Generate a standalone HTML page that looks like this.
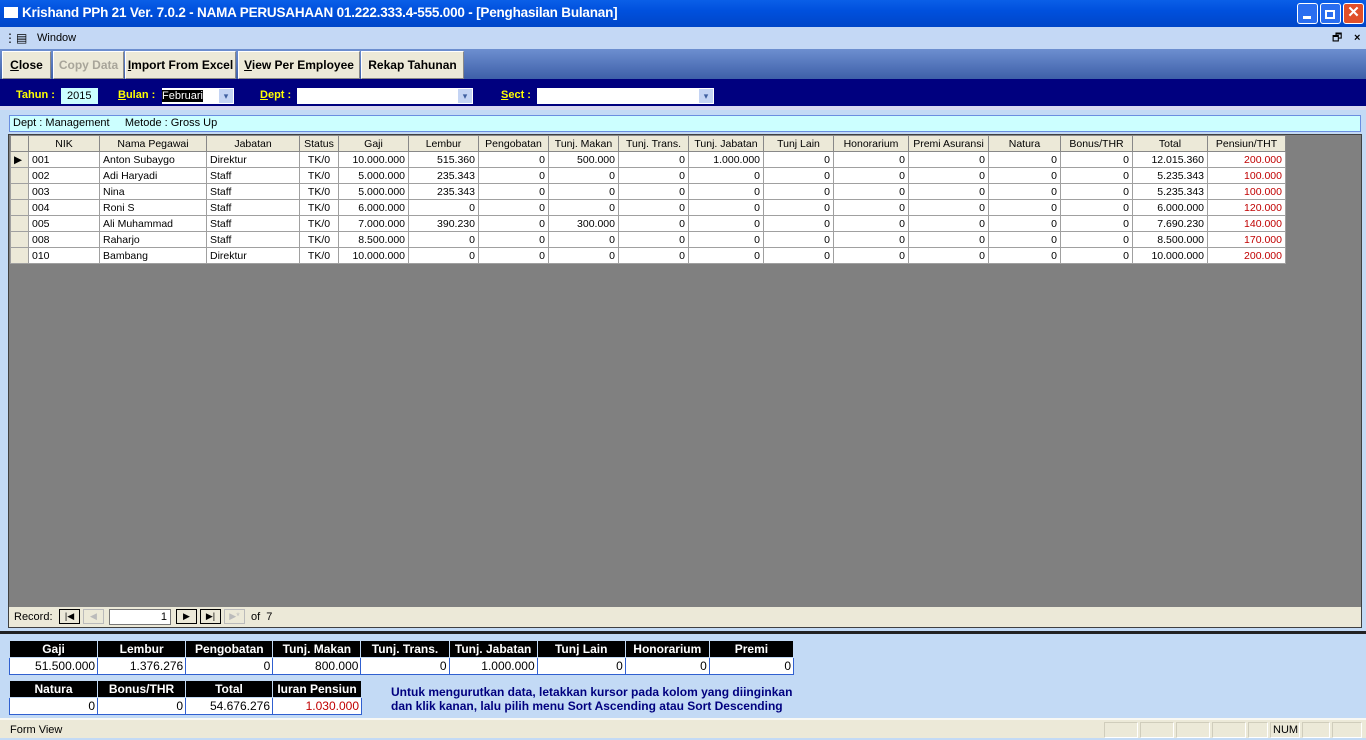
<!DOCTYPE html>
<html><head><meta charset="utf-8"><style>
*{margin:0;padding:0;box-sizing:border-box}
body{width:1366px;height:738px;overflow:hidden;background:#c3daf5;font-family:"Liberation Sans",sans-serif;position:relative}
.a{position:absolute}
#title{left:0;top:0;width:1366px;height:27px;background:linear-gradient(#0a5fe8,#0050dd 40%,#0046c8);color:#fff;font-weight:bold;font-size:13.5px;line-height:26px;padding-left:22px;letter-spacing:-0.2px}
.wb{top:3px;width:21px;height:21px;border:1px solid #fff;border-radius:3px;background:#2a6ef0}
#menu{left:0;top:27px;width:1366px;height:22px;background:#c4d8f5;font-size:11px;line-height:22px}
#tool{left:0;top:49px;width:1366px;height:30px;background:linear-gradient(#6d8fd0,#3e5fa8)}
.btn{position:absolute;top:51px;height:28px;background:#ece9d8;border:1px solid #888;border-top-color:#fff;border-left-color:#fff;font-weight:bold;font-size:12px;line-height:26px;text-align:center;color:#000}
#filt{left:0;top:79px;width:1366px;height:31px;background:#00007f;border-bottom:4px solid #d8d8f0}
.lab{color:#ffff00;font-weight:bold;font-size:11px;top:89px}
.inp{background:#fff;height:16px;top:88px}
#info{left:9px;top:115px;width:1352px;height:17px;background:#ccffff;border:1px solid #6a8ee0;font-size:11px;line-height:15px;padding-left:3px}
#grid{left:8px;top:134px;width:1354px;height:494px;background:#808080;border:1px solid #404040}
table{border-collapse:collapse;font-size:10.5px;table-layout:fixed}
td{height:16px;border:1px solid #a0a0a0;background:#fff;padding:0 3px;white-space:nowrap;overflow:hidden}
tr.h td{background:#ece9d8;text-align:center;border-color:#888}
td.s{background:#ece9d8}
.r{text-align:right}.c{text-align:center}.red{color:#c00000}
#nav{left:9px;top:607px;width:1352px;height:20px;background:#ece9d8;font-size:11px;line-height:20px}
.nb{position:absolute;top:2px;width:21px;height:15px;border:1px solid #000;background:#ece9d8;font-size:9px;line-height:13px;text-align:center}
#sep{left:0;top:631px;width:1366px;height:3px;background:#222}
.st{border-collapse:collapse;font-size:12px}
.st td{border:1px solid #3060d0;height:17px;padding:0 2px}
.st tr.hh td{background:#000;color:#fff;font-weight:bold;text-align:center;border-color:#c3daf5}
.st tr.v td{text-align:right;background:#fff}
#status{left:0;top:718px;width:1366px;height:20px;background:#ece9d8;border-top:2px solid #f8f8f4;font-size:11px;line-height:20px;padding-left:10px}
.pn{position:absolute;top:2px;height:16px;border:1px solid #d0cdbc;border-right-color:#fff;border-bottom-color:#fff}
</style></head><body>
<div id="title" class="a">Krishand PPh 21 Ver. 7.0.2 - NAMA PERUSAHAAN 01.222.333.4-555.000 - [Penghasilan Bulanan]</div>
<div class="a" style="left:4px;top:7px;width:14px;height:11px;background:#fff"></div>
<div class="a wb" style="left:1297px"><div class="a" style="left:5px;top:12px;width:8px;height:3px;background:#fff"></div></div>
<div class="a wb" style="left:1320px"><div class="a" style="left:4px;top:6px;width:10px;height:9px;border:2px solid #fff"></div></div>
<div class="a wb" style="left:1343px;background:#e0502a;color:#fff;font-weight:bold;text-align:center;line-height:18px;font-size:15px">✕</div>
<div id="menu" class="a"><span style="position:absolute;left:4px;top:0;font-size:12px">⋮▤</span><span style="position:absolute;left:37px">Window</span><span style="position:absolute;left:1332px;font-size:11px">🗗</span><span style="position:absolute;left:1354px;font-weight:bold">×</span></div>
<div id="tool" class="a"></div>
<div class="btn" style="left:2px;width:49px"><u>C</u>lose</div>
<div class="btn" style="left:53px;width:71px;color:#a8a59a">Copy Data</div>
<div class="btn" style="left:125px;width:111px"><u>I</u>mport From Excel</div>
<div class="btn" style="left:238px;width:122px"><u>V</u>iew Per Employee</div>
<div class="btn" style="left:361px;width:103px">Rekap Tahunan</div>
<div id="filt" class="a"></div>
<div class="a lab" style="left:16px">Tahun :</div>
<div class="a inp" style="left:61px;width:37px;background:#ccffff;font-size:11px;padding-left:6px;line-height:16px">2015</div>
<div class="a lab" style="left:118px"><u>B</u>ulan :</div>
<div class="a inp" style="left:162px;width:72px;font-size:11px;line-height:16px"><span style="background:#000;color:#fff">Februari</span><span class="a" style="right:1px;top:1px;width:14px;height:14px;background:#c4d4f4;color:#4060a0;font-size:9px;text-align:center;line-height:14px">▾</span></div>
<div class="a lab" style="left:260px"><u>D</u>ept :</div>
<div class="a inp" style="left:297px;width:176px"><span class="a" style="right:1px;top:1px;width:14px;height:14px;background:#c4d4f4;color:#4060a0;font-size:9px;text-align:center;line-height:14px">▾</span></div>
<div class="a lab" style="left:501px"><u>S</u>ect :</div>
<div class="a inp" style="left:537px;width:177px"><span class="a" style="right:1px;top:1px;width:14px;height:14px;background:#c4d4f4;color:#4060a0;font-size:9px;text-align:center;line-height:14px">▾</span></div>
<div id="info" class="a">Dept : Management &nbsp;&nbsp;&nbsp;&nbsp;Metode : Gross Up</div>
<div id="grid" class="a">
<table style="position:absolute;left:1px;top:0">
<colgroup><col width="18"><col width="71"><col width="107"><col width="93"><col width="39"><col width="70"><col width="70"><col width="70"><col width="70"><col width="70"><col width="75"><col width="70"><col width="75"><col width="80"><col width="72"><col width="72"><col width="75"><col width="78"></colgroup>
<tr class="h"><td></td><td>NIK</td><td>Nama Pegawai</td><td>Jabatan</td><td>Status</td><td>Gaji</td><td>Lembur</td><td>Pengobatan</td><td>Tunj. Makan</td><td>Tunj. Trans.</td><td>Tunj. Jabatan</td><td>Tunj Lain</td><td>Honorarium</td><td>Premi Asuransi</td><td>Natura</td><td>Bonus/THR</td><td>Total</td><td>Pensiun/THT</td></tr>
<tr><td class="s">▶</td><td>001</td><td>Anton Subaygo</td><td>Direktur</td><td class="c">TK/0</td><td class="r">10.000.000</td><td class="r">515.360</td><td class="r">0</td><td class="r">500.000</td><td class="r">0</td><td class="r">1.000.000</td><td class="r">0</td><td class="r">0</td><td class="r">0</td><td class="r">0</td><td class="r">0</td><td class="r">12.015.360</td><td class="r red">200.000</td></tr>
<tr><td class="s"></td><td>002</td><td>Adi Haryadi</td><td>Staff</td><td class="c">TK/0</td><td class="r">5.000.000</td><td class="r">235.343</td><td class="r">0</td><td class="r">0</td><td class="r">0</td><td class="r">0</td><td class="r">0</td><td class="r">0</td><td class="r">0</td><td class="r">0</td><td class="r">0</td><td class="r">5.235.343</td><td class="r red">100.000</td></tr>
<tr><td class="s"></td><td>003</td><td>Nina</td><td>Staff</td><td class="c">TK/0</td><td class="r">5.000.000</td><td class="r">235.343</td><td class="r">0</td><td class="r">0</td><td class="r">0</td><td class="r">0</td><td class="r">0</td><td class="r">0</td><td class="r">0</td><td class="r">0</td><td class="r">0</td><td class="r">5.235.343</td><td class="r red">100.000</td></tr>
<tr><td class="s"></td><td>004</td><td>Roni S</td><td>Staff</td><td class="c">TK/0</td><td class="r">6.000.000</td><td class="r">0</td><td class="r">0</td><td class="r">0</td><td class="r">0</td><td class="r">0</td><td class="r">0</td><td class="r">0</td><td class="r">0</td><td class="r">0</td><td class="r">0</td><td class="r">6.000.000</td><td class="r red">120.000</td></tr>
<tr><td class="s"></td><td>005</td><td>Ali Muhammad</td><td>Staff</td><td class="c">TK/0</td><td class="r">7.000.000</td><td class="r">390.230</td><td class="r">0</td><td class="r">300.000</td><td class="r">0</td><td class="r">0</td><td class="r">0</td><td class="r">0</td><td class="r">0</td><td class="r">0</td><td class="r">0</td><td class="r">7.690.230</td><td class="r red">140.000</td></tr>
<tr><td class="s"></td><td>008</td><td>Raharjo</td><td>Staff</td><td class="c">TK/0</td><td class="r">8.500.000</td><td class="r">0</td><td class="r">0</td><td class="r">0</td><td class="r">0</td><td class="r">0</td><td class="r">0</td><td class="r">0</td><td class="r">0</td><td class="r">0</td><td class="r">0</td><td class="r">8.500.000</td><td class="r red">170.000</td></tr>
<tr><td class="s"></td><td>010</td><td>Bambang</td><td>Direktur</td><td class="c">TK/0</td><td class="r">10.000.000</td><td class="r">0</td><td class="r">0</td><td class="r">0</td><td class="r">0</td><td class="r">0</td><td class="r">0</td><td class="r">0</td><td class="r">0</td><td class="r">0</td><td class="r">0</td><td class="r">10.000.000</td><td class="r red">200.000</td></tr>
</table>
</div>
<div id="nav" class="a"><span style="position:absolute;left:5px">Record:</span>
<div class="nb" style="left:50px">|◀</div><div class="nb" style="left:74px;border-color:#bbb;color:#bbb">◀</div>
<div class="a" style="left:100px;top:2px;width:62px;height:16px;background:#fff;border:1px solid #777;text-align:right;padding-right:3px;line-height:14px">1</div>
<div class="nb" style="left:167px">▶</div><div class="nb" style="left:191px">▶|</div><div class="nb" style="left:215px;border-color:#bbb;color:#bbb">▶*</div>
<span style="position:absolute;left:242px">of &nbsp;7</span></div>
<div id="sep" class="a"></div>
<table class="st a" style="left:9px;top:640px;table-layout:fixed;width:785px">
<colgroup><col width="88"><col width="88"><col width="87"><col width="88"><col width="88"><col width="88"><col width="88"><col width="84"><col width="84"></colgroup>
<tr class="hh"><td>Gaji</td><td>Lembur</td><td>Pengobatan</td><td>Tunj. Makan</td><td>Tunj. Trans.</td><td>Tunj. Jabatan</td><td>Tunj Lain</td><td>Honorarium</td><td>Premi</td></tr>
<tr class="v"><td>51.500.000</td><td>1.376.276</td><td>0</td><td>800.000</td><td>0</td><td>1.000.000</td><td>0</td><td>0</td><td>0</td></tr>
</table>
<table class="st a" style="left:9px;top:680px;table-layout:fixed;width:352px">
<colgroup><col width="88"><col width="88"><col width="87"><col width="89"></colgroup>
<tr class="hh"><td>Natura</td><td>Bonus/THR</td><td>Total</td><td>Iuran Pensiun</td></tr>
<tr class="v"><td>0</td><td>0</td><td>54.676.276</td><td class="red">1.030.000</td></tr>
</table>
<div class="a" style="left:391px;top:685px;color:#00007f;font-weight:bold;font-size:12px;line-height:14px">Untuk mengurutkan data, letakkan kursor pada kolom yang diinginkan<br>dan klik kanan, lalu pilih menu Sort Ascending atau Sort Descending</div>
<div id="status" class="a">Form View
<div class="pn" style="left:1104px;width:34px"></div><div class="pn" style="left:1140px;width:34px"></div><div class="pn" style="left:1176px;width:34px"></div><div class="pn" style="left:1212px;width:34px"></div><div class="pn" style="left:1248px;width:20px"></div>
<div class="pn" style="left:1270px;width:30px;line-height:14px;padding-left:2px">NUM</div><div class="pn" style="left:1302px;width:28px"></div><div class="pn" style="left:1332px;width:30px"></div></div>
</body></html>
